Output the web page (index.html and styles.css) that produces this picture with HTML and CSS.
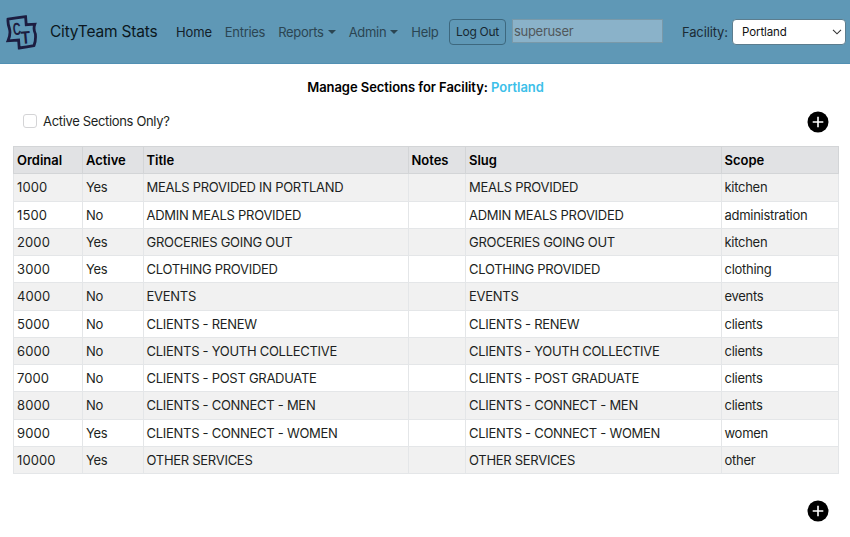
FILE: index.html
```html
<!DOCTYPE html>
<html lang="en">
<head>
<meta charset="utf-8">
<title>CityTeam Stats</title>
<link rel="stylesheet" href="styles.css">
</head>
<body>
<nav class="navbar">
  <svg class="logo" viewBox="0 0 32 36" width="32" height="36" aria-hidden="true">
    <path class="logo-outline" d="M2 4.2 Q10 2.8 19.6 1.7 L20.2 9.7 L28.8 9.2 Q27 14 29.4 19 Q30 26 28 30.6 Q21 32 13.2 33 L12.6 25 L2 25.8 Q5 19 3.4 13.5 Q1.6 8 2 4.2Z"/>
    <text class="logo-letter" transform="translate(7.4 20.2) rotate(-6) scale(.69 1.08)">C</text>
    <text class="logo-letter" transform="translate(15.6 29) rotate(-5) scale(.95 1.12)">T</text>
  </svg>
  <span class="brand">CityTeam Stats</span>
  <div class="links">
    <a class="link current">Home</a>
    <a class="link">Entries</a>
    <a class="link menu">Reports</a>
    <a class="link menu">Admin</a>
    <a class="link">Help</a>
  </div>
  <button class="logout">Log Out</button>
  <input class="user" value="superuser" disabled>
  <span class="facility">Facility:</span>
  <div class="select"><span>Portland</span>
    <svg width="10" height="6" viewBox="0 0 10 6"><path d="M1 .8 5 4.8 9 .8" fill="none" stroke="#333" stroke-width="1.1"/></svg>
  </div>
</nav>
<main>
  <h1>Manage Sections for Facility: <span class="info">Portland</span></h1>
  <div class="toolbar">
    <label class="check"><span class="box"></span><span>Active Sections Only?</span></label>
    <svg class="add" viewBox="0 0 22 22"><circle cx="11" cy="11" r="10.5"/><path d="M11 5.7v10.6M5.7 11h10.6"/></svg>
  </div>
  <table>
    <colgroup><col class="c1"><col class="c2"><col class="c3"><col class="c4"><col class="c5"><col class="c6"></colgroup>
    <thead><tr><th>Ordinal</th><th>Active</th><th>Title</th><th>Notes</th><th>Slug</th><th>Scope</th></tr></thead>
    <tbody>
      <tr><td>1000</td><td>Yes</td><td>MEALS PROVIDED IN PORTLAND</td><td></td><td>MEALS PROVIDED</td><td>kitchen</td></tr>
      <tr><td>1500</td><td>No</td><td>ADMIN MEALS PROVIDED</td><td></td><td>ADMIN MEALS PROVIDED</td><td>administration</td></tr>
      <tr><td>2000</td><td>Yes</td><td>GROCERIES GOING OUT</td><td></td><td>GROCERIES GOING OUT</td><td>kitchen</td></tr>
      <tr><td>3000</td><td>Yes</td><td>CLOTHING PROVIDED</td><td></td><td>CLOTHING PROVIDED</td><td>clothing</td></tr>
      <tr><td>4000</td><td>No</td><td>EVENTS</td><td></td><td>EVENTS</td><td>events</td></tr>
      <tr><td>5000</td><td>No</td><td>CLIENTS - RENEW</td><td></td><td>CLIENTS - RENEW</td><td>clients</td></tr>
      <tr><td>6000</td><td>No</td><td>CLIENTS - YOUTH COLLECTIVE</td><td></td><td>CLIENTS - YOUTH COLLECTIVE</td><td>clients</td></tr>
      <tr><td>7000</td><td>No</td><td>CLIENTS - POST GRADUATE</td><td></td><td>CLIENTS - POST GRADUATE</td><td>clients</td></tr>
      <tr><td>8000</td><td>No</td><td>CLIENTS - CONNECT - MEN</td><td></td><td>CLIENTS - CONNECT - MEN</td><td>clients</td></tr>
      <tr><td>9000</td><td>Yes</td><td>CLIENTS - CONNECT - WOMEN</td><td></td><td>CLIENTS - CONNECT - WOMEN</td><td>women</td></tr>
      <tr><td>10000</td><td>Yes</td><td>OTHER SERVICES</td><td></td><td>OTHER SERVICES</td><td>other</td></tr>
    </tbody>
  </table>
  <div class="footer">
    <svg class="add" viewBox="0 0 22 22"><circle cx="11" cy="11" r="10.5"/><path d="M11 5.7v10.6M5.7 11h10.6"/></svg>
  </div>
</main>
</body>
</html>
```
FILE: styles.css
```css
* { box-sizing: border-box; }
body { margin: 0; background: #fff; color: #1c1f22; font: 370 13px/20px Inter, "Liberation Sans", sans-serif; letter-spacing: -.28px; overflow: hidden; }
.navbar { display: flex; align-items: center; height: 64px; padding-left: 6px; background: #5f98b6; border-bottom: 1px solid #5190b3; }
.logo { flex: none; margin-top: 2px; }
.logo-outline { fill: none; stroke: #1c1d40; stroke-width: 2.8; stroke-linejoin: miter; }
.logo-letter { font: bold 16px "Liberation Sans", sans-serif; letter-spacing: 0; fill: #1c1d40; }
.brand { width: 126px; margin-left: 12px; font-size: 15.5px; line-height: 24px; letter-spacing: -.2px; color: #0b1720; white-space: nowrap; }
.links { display: flex; width: 273px; gap: 13px; letter-spacing: -.3px; white-space: nowrap; padding-top: 1px; }
.link { color: #2b4552; }
.link.current { color: #13202a; letter-spacing: -.15px; }
.menu::after { content: ""; display: inline-block; margin-left: 4px; vertical-align: 3px; border: 4px solid transparent; border-top-color: currentColor; border-bottom: 0; }
.logout { flex: none; width: 57px; height: 26px; padding: 0; border: 1px solid #3d687e; border-radius: 4px; background: transparent; color: #172832; font: 370 12px Inter, sans-serif; letter-spacing: -.3px; }
.user { width: 151px; height: 24px; margin: -2px 0 0 6px; padding: 0 1px; border: 1px solid #7999a9; border-radius: 0; background: #8ab2c9; color: #51585c; font: 370 13px Inter, sans-serif; letter-spacing: -.3px; }
.facility { width: 50px; margin-left: 19px; color: #1b2b35; letter-spacing: -.15px; white-space: nowrap; }
.select { display: flex; align-items: center; justify-content: space-between; width: 114px; height: 26px; padding: 0 3px 0 9px; border: 1px solid #5c7d8e; border-radius: 4px; background: #fff; font-size: 11.5px; letter-spacing: -.1px; color: #111; }
main { padding: 0 12px 0 13px; }
h1 { margin: 13px 0 0; font-size: 13px; line-height: 20px; font-weight: 600; letter-spacing: -.06px; color: #000; text-align: center; }
.info { color: #3dbfe9; }
.toolbar { display: flex; align-items: center; justify-content: space-between; height: 49px; padding: 0 9px 0 10px; }
.check { display: flex; align-items: center; gap: 6px; margin-top: -2px; letter-spacing: -.34px; }
.box { width: 14px; height: 14px; border: 1px solid #d4d4d6; border-radius: 3px; }
.add { display: block; width: 22px; height: 22px; }
.add circle { fill: #000; }
.add path { stroke: #fff; stroke-width: 1.6; fill: none; }
table { width: 825px; border-collapse: collapse; table-layout: fixed; }
.c1 { width: 69px; } .c2 { width: 60.5px; } .c3 { width: 265px; } .c4 { width: 57.5px; } .c5 { width: 255.5px; } .c6 { width: 117.5px; }
th, td { height: 27.25px; padding: 0 3px; border: 1px solid #e4e6e8; line-height: 20px; text-align: left; white-space: nowrap; }
th { background: #e1e2e4; border-color: #d3d5d7; color: #000; font-weight: 600; letter-spacing: -.02px; }
td:first-child { letter-spacing: .1px; }
tbody tr:nth-child(odd) { background: #f1f1f1; }
.footer { display: flex; justify-content: flex-end; padding: 26px 9px 0 0; }
```
